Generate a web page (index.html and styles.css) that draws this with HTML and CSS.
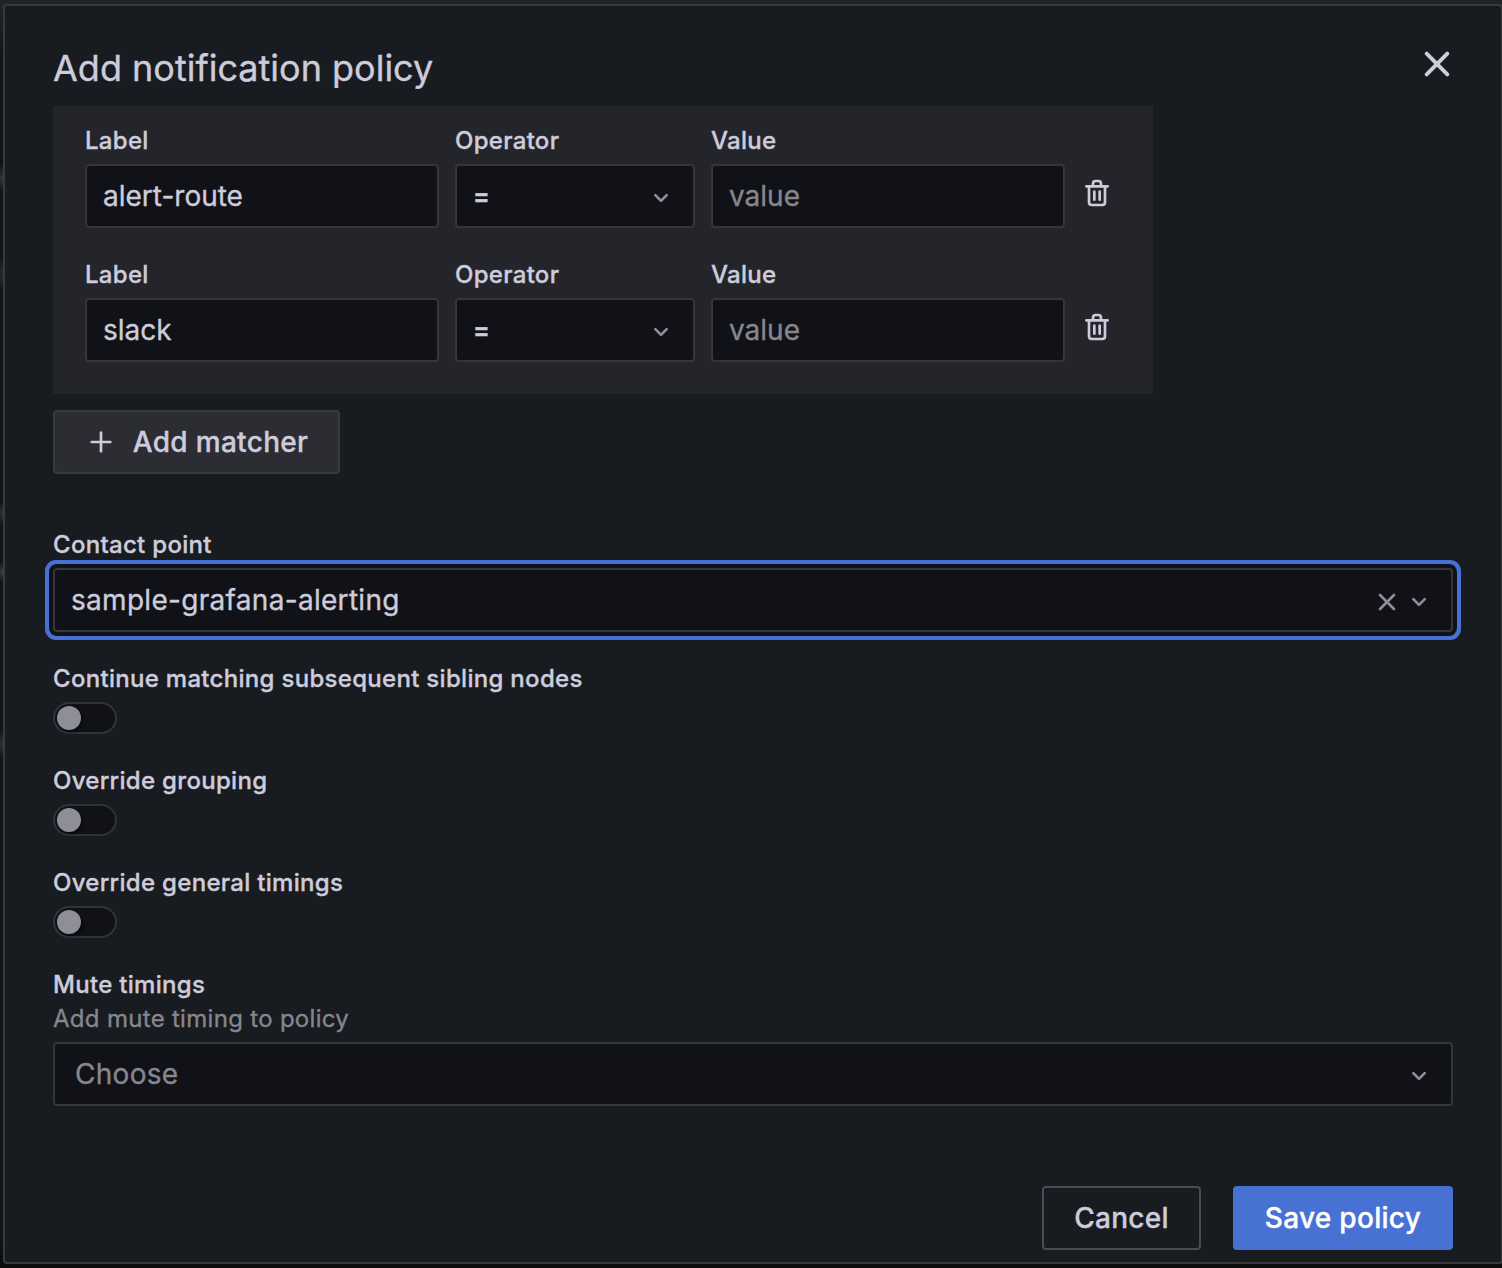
FILE: index.html
```html
<!DOCTYPE html>
<html lang="en">
<head>
<meta charset="utf-8">
<title>Add notification policy</title>
<link rel="stylesheet" href="styles.css">
</head>
<body>
<svg class="sprite" aria-hidden="true">
  <symbol id="angle-down" viewBox="0 0 24 24"><path d="M17,9.17a1,1,0,0,0-1.41,0L12,12.71,8.46,9.17a1,1,0,0,0-1.41,0,1,1,0,0,0,0,1.42l4.24,4.24a1,1,0,0,0,1.42,0L17,10.59A1,1,0,0,0,17,9.17Z"/></symbol>
  <symbol id="trash" viewBox="0 0 24 24"><path d="M10,18a1,1,0,0,0,1-1V11a1,1,0,0,0-2,0v6A1,1,0,0,0,10,18ZM20,6H16V5a3,3,0,0,0-3-3H11A3,3,0,0,0,8,5V6H4A1,1,0,0,0,4,8H5V19a3,3,0,0,0,3,3h8a3,3,0,0,0,3-3V8h1a1,1,0,0,0,0-2ZM10,5a1,1,0,0,1,1-1h2a1,1,0,0,1,1,1V6H10Zm7,14a1,1,0,0,1-1,1H8a1,1,0,0,1-1-1V8H17Zm-3-1a1,1,0,0,0,1-1V11a1,1,0,0,0-2,0v6A1,1,0,0,0,14,18Z"/></symbol>
  <symbol id="plus" viewBox="0 0 24 24"><path d="M19,11H13V5a1,1,0,0,0-2,0v6H5a1,1,0,0,0,0,2h6v6a1,1,0,0,0,2,0V13h6a1,1,0,0,0,0-2Z"/></symbol>
</svg>
<div class="modal">
  <header class="modal-header">
    <h1 class="title">Add notification policy</h1>
    <svg class="close" viewBox="0 0 32 32"><path d="M5.7 5.7 26.3 26.3M26.3 5.7 5.7 26.3"/></svg>
  </header>
  <section class="matchers">
    <div class="matcher">
      <div class="field wide"><span class="label">Label</span><div class="input text">alert-route</div></div>
      <div class="field narrow"><span class="label">Operator</span><div class="input select"><span class="operator">=</span><svg class="icon muted"><use href="#angle-down"/></svg></div></div>
      <div class="field wide"><span class="label">Value</span><div class="input text placeholder">value</div></div>
      <svg class="icon trash"><use href="#trash"/></svg>
    </div>
    <div class="matcher">
      <div class="field wide"><span class="label">Label</span><div class="input text">slack</div></div>
      <div class="field narrow"><span class="label">Operator</span><div class="input select"><span class="operator">=</span><svg class="icon muted"><use href="#angle-down"/></svg></div></div>
      <div class="field wide"><span class="label">Value</span><div class="input text placeholder">value</div></div>
      <svg class="icon trash"><use href="#trash"/></svg>
    </div>
  </section>
  <div class="button add"><svg class="icon"><use href="#plus"/></svg><span>Add matcher</span></div>
  <div class="field contact">
    <span class="label">Contact point</span>
    <div class="input select focused"><span>sample-grafana-alerting</span><span class="indicators"><svg class="clear" viewBox="0 0 32 32"><path d="M9 9 23 23M23 9 9 23"/></svg><svg class="icon muted"><use href="#angle-down"/></svg></span></div>
  </div>
  <div class="field toggle"><span class="label">Continue matching subsequent sibling nodes</span><div class="switch"><span class="knob"></span></div></div>
  <div class="field toggle"><span class="label">Override grouping</span><div class="switch"><span class="knob"></span></div></div>
  <div class="field toggle"><span class="label">Override general timings</span><div class="switch"><span class="knob"></span></div></div>
  <div class="field mute">
    <span class="label">Mute timings</span>
    <span class="description">Add mute timing to policy</span>
    <div class="input select placeholder choose"><span>Choose</span><svg class="icon muted"><use href="#angle-down"/></svg></div>
  </div>
  <footer class="actions">
    <div class="button cancel">Cancel</div>
    <div class="button save">Save policy</div>
  </footer>
</div>
</body>
</html>
```
FILE: styles.css
```css
* { box-sizing: border-box; }
html { overflow: hidden; }
body {
  margin: 0;
  padding: 4px 0 4px 3px;
  width: 1502px;
  height: 1268px;
  overflow: hidden;
  background:
    radial-gradient(6px 14px at 3px 178px, #3a3b3f, transparent),
    radial-gradient(6px 18px at 3px 274px, #2c2d31, transparent),
    radial-gradient(6px 12px at 3px 513px, #38393d, transparent),
    radial-gradient(6px 10px at 3px 572px, #414246, transparent),
    radial-gradient(6px 14px at 3px 744px, #38393d, transparent),
    linear-gradient(#222327 0, #222327 6px, #131416 60px, #131416 1240px, #0b0c0e 1262px);
  color: #ccccdc;
  font: 400 28px/44px Inter, "Liberation Sans", sans-serif;
  letter-spacing: 0.3px;
  -webkit-text-stroke: 0.35px currentColor;
}
.sprite { display: none; }
.modal {
  display: flex;
  flex-direction: column;
  width: 1500px;
  height: 1260px;
  padding: 0 48px;
  background: #181b1f;
  border: 2px solid #37393d;
  border-radius: 4px;
}
.modal-header {
  display: flex;
  justify-content: space-between;
  align-items: flex-start;
  height: 100px;
  padding-top: 40px;
}
.title { margin: 0; font-size: 36px; line-height: 44px; font-weight: 400; letter-spacing: 0; }
.close { width: 32px; height: 32px; margin-top: 2px; stroke: #ccccdc; stroke-width: 4; stroke-linecap: round; fill: none; }
.icon { width: 32px; height: 32px; fill: currentColor; flex: none; }
.muted { color: #8e8e99; }
.matchers { width: 1100px; height: 288px; padding: 18px 32px 0; background: #24252a; }
.matcher { display: flex; gap: 16px; height: 134px; }
.field { display: flex; flex-direction: column; }
.wide { width: 354px; }
.narrow { width: 240px; }
.label { height: 34px; margin-bottom: 6px; font-size: 24px; line-height: 34px; font-weight: 500; letter-spacing: 0.3px; }
.input {
  height: 64px;
  padding: 0 16px;
  line-height: 60px;
  background: #111217;
  border: 2px solid #35363b;
  border-radius: 4px;
}
.text { letter-spacing: 0; }
.select { display: flex; justify-content: space-between; align-items: center; }
.select .icon { position: relative; top: 2px; }
.operator { font-size: 25px; font-weight: 600; }
.placeholder { color: #85868e; }
.trash { margin-top: 53px; }
.button {
  display: flex;
  align-items: center;
  justify-content: center;
  height: 64px;
  border: 2px solid #393a3f;
  border-radius: 4px;
  font-weight: 500;
}
.add { width: 287px; margin-top: 16px; gap: 16px; background: #2c2d32; }
.contact { margin-top: 54px; }
.focused { box-shadow: 0 0 0 4px #111217, 0 0 0 8px #4772d3; }
.indicators { display: flex; }
.clear { position: relative; top: 2px; width: 32px; height: 32px; stroke: #8e8e99; stroke-width: 2.7; stroke-linecap: round; fill: none; }
.toggle { height: 72px; margin-top: 30px; }
.switch { width: 64px; height: 32px; padding: 2px; background: #111217; border: 2px solid #323338; border-radius: 16px; }
.knob { display: block; width: 24px; height: 24px; border-radius: 50%; background: #8e8e99; box-shadow: 2px 2px 3px rgba(0, 0, 0, 0.5); }
.mute { margin-top: 30px; }
.mute .label { margin-bottom: 0; }
.description { height: 34px; margin-bottom: 6px; font-size: 24px; line-height: 34px; color: #85868e; letter-spacing: 0.3px; }
.choose { padding-left: 20px; }
.actions { display: flex; justify-content: flex-end; gap: 32px; margin-top: 80px; }
.cancel { width: 159px; border-color: #4a4c53; }
.save { width: 220px; background: #4772d3; border-color: #4772d3; color: #fff; }
```
